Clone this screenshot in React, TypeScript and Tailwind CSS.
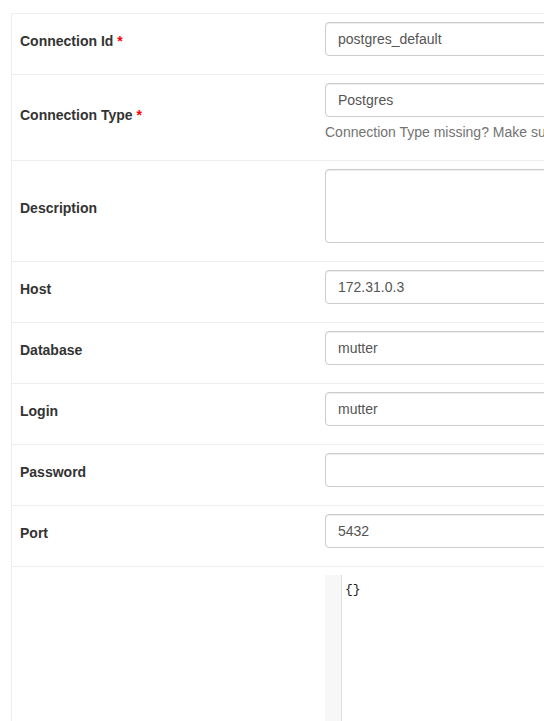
import React from "react";

const inputCls =
  "block w-full h-[34px] px-3 py-[6px] text-[14px] leading-[20px] text-[#555] bg-white border border-[#ccc] rounded-[4px] shadow-[inset_0_1px_1px_rgba(0,0,0,0.075)] outline-none";

function Row({
  label,
  required,
  children,
}: {
  label: string;
  required?: boolean;
  children: React.ReactNode;
}) {
  return (
    <div className="flex items-center border-b border-[#eee]">
      <div className="w-[305px] shrink-0 px-2 pt-[5px] pb-[11px]">
        <span className="font-bold text-[14px] leading-[20px] text-[#333]">
          {label}
          {required && <span className="text-[#f00]"> *</span>}
        </span>
      </div>
      <div className="flex-1 px-2 pt-2 pb-2">{children}</div>
    </div>
  );
}

function TextInput({ value }: { value: string }) {
  return <input className={inputCls} defaultValue={value} readOnly />;
}

export default function App() {
  return (
    <div className="w-[544px] h-[721px] overflow-hidden bg-white pt-[13px] pl-[11px] font-['Liberation_Sans',Arial,sans-serif]">
      <div className="w-[900px] h-[800px] border-l border-t border-[#eee]">
        <Row label="Connection Id" required>
          <div className="mb-[10px]">
            <TextInput value="postgres_default" />
          </div>
        </Row>
        <Row label="Connection Type" required>
          <div className="mb-[10px]">
            <TextInput value="Postgres" />
            <p className="mt-[5px] text-[14px] leading-[20px] text-[#737373] whitespace-nowrap">
              Connection Type missing? Make sure you've installed the
              corresponding Airflow Provider Package.
            </p>
          </div>
        </Row>
        <Row label="Description">
          <div className="mb-[10px]">
            <textarea
              className="block w-full h-[74px] px-3 py-[6px] text-[14px] text-[#555] bg-white border border-[#ccc] rounded-[4px] shadow-[inset_0_1px_1px_rgba(0,0,0,0.075)] outline-none resize-none"
              readOnly
            />
          </div>
        </Row>
        <Row label="Host">
          <div className="mb-[10px]">
            <TextInput value="172.31.0.3" />
          </div>
        </Row>
        <Row label="Database">
          <div className="mb-[10px]">
            <TextInput value="mutter" />
          </div>
        </Row>
        <Row label="Login">
          <div className="mb-[10px]">
            <TextInput value="mutter" />
          </div>
        </Row>
        <Row label="Password">
          <div className="mb-[10px]">
            <input className={inputCls} type="password" readOnly />
          </div>
        </Row>
        <Row label="Port">
          <div className="mb-[10px]">
            <TextInput value="5432" />
          </div>
        </Row>
        <div className="flex">
          <div className="w-[305px] shrink-0 px-2 py-2" />
          <div className="flex-1 px-2 pt-2">
            <div className="flex h-[300px] bg-white">
              <div className="w-[17px] shrink-0 bg-[#f7f7f7] border-r border-[#ddd]" />
              <div className="px-[3px] pt-[7px] font-['Liberation_Mono',monospace] text-[13px] leading-[16px] text-[#222]">
                {"{}"}
              </div>
            </div>
          </div>
        </div>
      </div>
    </div>
  );
}
